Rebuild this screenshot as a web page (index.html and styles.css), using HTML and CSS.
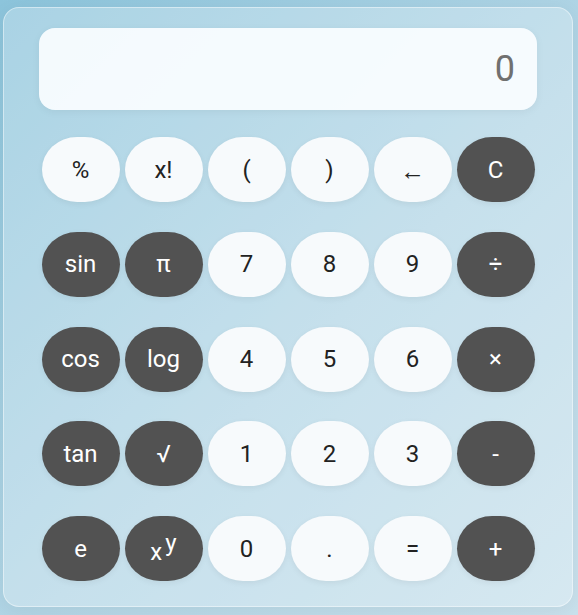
FILE: index.html
```html
<!DOCTYPE html>
<html>
<head>
<meta charset="utf-8">
<link rel="stylesheet" href="styles.css">
</head>
<body>
<div class="calc">
  <div class="display">0</div>
  <div class="keys">
    <button class="key">%</button>
    <button class="key">x!</button>
    <button class="key">(</button>
    <button class="key">)</button>
    <button class="key"><span class="arrow">←</span></button>
    <button class="key dark">C</button>

    <button class="key dark">sin</button>
    <button class="key dark">π</button>
    <button class="key">7</button>
    <button class="key">8</button>
    <button class="key">9</button>
    <button class="key dark">÷</button>

    <button class="key dark">cos</button>
    <button class="key dark">log</button>
    <button class="key">4</button>
    <button class="key">5</button>
    <button class="key">6</button>
    <button class="key dark">×</button>

    <button class="key dark">tan</button>
    <button class="key dark">√</button>
    <button class="key">1</button>
    <button class="key">2</button>
    <button class="key">3</button>
    <button class="key dark">-</button>

    <button class="key dark">e</button>
    <button class="key dark"><span class="base">x</span><sup class="sup">y</sup></button>
    <button class="key">0</button>
    <button class="key">.</button>
    <button class="key">=</button>
    <button class="key dark">+</button>
  </div>
</div>
</body>
</html>
```
FILE: styles.css
```css
html, body {
  margin: 0;
  height: 100%;
}
body {
  background: linear-gradient(135deg, #8cc4db 0%, #b3d6e6 55%, #c9e1ec 100%);
  font-family: Roboto, "Liberation Sans", sans-serif;
  padding: 7px 0 0 3px;
  box-sizing: border-box;
}
.calc {
  width: 570px;
  height: 600px;
  box-sizing: border-box;
  border: 1px solid rgba(255,255,255,0.45);
  border-radius: 16px;
  background: rgba(255,255,255,0.25);
  box-shadow: 0 4px 20px rgba(0,0,0,0.06);
  padding: 20px 35px 0 35px;
}
.display {
  height: 82px;
  box-sizing: border-box;
  background: rgba(250,253,255,0.93);
  border-radius: 16px;
  box-shadow: 0 2px 8px rgba(0,0,0,0.05);
  font-size: 36px;
  color: #707070;
  text-align: right;
  padding-right: 22px;
  line-height: 82px;
}
.keys {
  margin-top: 27px;
  display: grid;
  grid-template-columns: repeat(6, 78px);
  grid-auto-rows: 65px;
  column-gap: 5px;
  row-gap: 29.75px;
  justify-content: center;
}
.key {
  border: none;
  border-radius: 45% / 50%;
  background: #f7fafc;
  color: #222;
  font-family: Roboto, "Liberation Sans", sans-serif;
  font-size: 24px;
  padding: 0;
  box-shadow: 0 2px 6px rgba(0,0,0,0.06);
}
.key.dark {
  background: #525252;
  color: #fff;
}
.arrow {
  font-size: 25px;
  position: relative;
  top: 2px;
}
.base {
  font-size: 24px;
  position: relative;
  top: 3px;
}
.sup {
  font-size: 24px;
  vertical-align: 6px;
  line-height: 0;
  margin-left: 3px;
}
```
